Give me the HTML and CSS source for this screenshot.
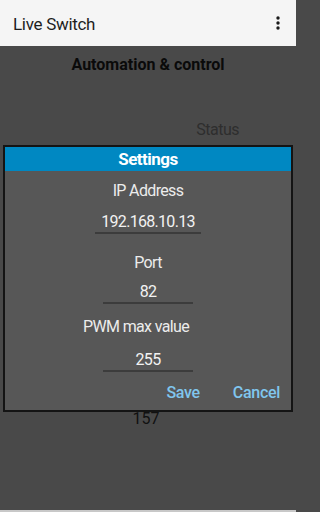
FILE: index.html
```html
<!DOCTYPE html>
<html>
<head>
<meta charset="utf-8">
<link rel="stylesheet" href="styles.css">
</head>
<body>
<header class="appbar">
  <span class="app-title">Live Switch</span>
  <svg class="menu" width="4" height="14" viewBox="0 0 4 14"><circle cx="2" cy="2" r="1.7"/><circle cx="2" cy="7" r="1.7"/><circle cx="2" cy="12" r="1.7"/></svg>
</header>
<main class="screen">
  <h1 class="heading">Automation &amp; control</h1>
  <div class="status">Status</div>
  <div class="reading">157</div>
  <section class="dialog">
    <div class="dialog-title">Settings</div>
    <div class="field-label first">IP Address</div>
    <div class="field-input wide">192.168.10.13</div>
    <div class="field-label gap-lg">Port</div>
    <div class="field-input tight">82</div>
    <div class="field-label shifted">PWM max value</div>
    <div class="field-input">255</div>
    <div class="actions">
      <span class="btn">Save</span>
      <span class="btn">Cancel</span>
    </div>
  </section>
</main>
<div class="bottom-edge"></div>
</body>
</html>
```
FILE: styles.css
```css
html, body {
  margin: 0;
  padding: 0;
}
body {
  width: 296px;
  height: 512px;
  background: #494949;
  font-family: Roboto, "Noto Sans", sans-serif;
  overflow: hidden;
  position: relative;
}
.appbar {
  height: 46px;
  background: #f5f5f5;
  display: flex;
  align-items: center;
  justify-content: space-between;
  padding: 0 16px 0 13px;
  box-sizing: border-box;
}
.app-title {
  font-size: 17px;
  letter-spacing: -0.3px;
  color: #1e1e1e;
  margin-top: 1px;
}
.menu {
  fill: #1a1a1a;
}
.screen {
  height: 464px;
  display: flex;
  flex-direction: column;
  align-items: center;
}
.heading {
  margin: 9px 0 0 0;
  font-size: 16px;
  font-weight: 700;
  color: #0a0a0a;
  line-height: 20px;
}
.status {
  align-self: flex-end;
  margin: 45px 57px 0 0;
  font-size: 16px;
  letter-spacing: -0.5px;
  line-height: 20px;
  color: #2e2e2e;
}
.reading {
  margin-top: 269px;
  margin-left: -4px;
  font-size: 16px;
  line-height: 20px;
  color: #111;
}
.dialog {
  position: absolute;
  left: 3px;
  top: 145px;
  width: 290px;
  height: 267px;
  box-sizing: border-box;
  border: 2px solid #141414;
  background: #575757;
  display: flex;
  flex-direction: column;
  align-items: center;
}
.dialog-title {
  align-self: stretch;
  height: 24px;
  line-height: 24px;
  background: #0088c2;
  color: #ffffff;
  text-align: center;
  font-size: 17px;
  letter-spacing: -0.5px;
  font-weight: 700;
}
.field-label {
  margin-top: 13px;
  font-size: 16px;
  letter-spacing: -0.65px;
  line-height: 20px;
  color: #ececec;
}
.field-label.first { margin-top: 10px; }
.field-label.gap-lg { margin-top: 19px; }
.field-label.shifted { margin-right: 24px; }
.field-input {
  margin-top: 13px;
  width: 90px;
  text-align: center;
  font-size: 16px;
  letter-spacing: -0.7px;
  line-height: 20px;
  color: #f2f2f2;
  border-bottom: 2px solid #3c3c3c;
}
.field-input.wide {
  width: 106px;
  margin-top: 11px;
}
.field-input.tight { margin-top: 9px; }
.actions {
  align-self: stretch;
  display: flex;
  justify-content: flex-end;
  gap: 33px;
  margin-top: 11px;
  padding-right: 11px;
}
.btn {
  font-size: 16px;
  letter-spacing: -0.3px;
  line-height: 20px;
  font-weight: 500;
  color: #80c6ee;
}
.bottom-edge {
  position: absolute;
  left: 0;
  right: 0;
  bottom: 0;
  height: 2px;
  background: #c8c8c8;
}
```
